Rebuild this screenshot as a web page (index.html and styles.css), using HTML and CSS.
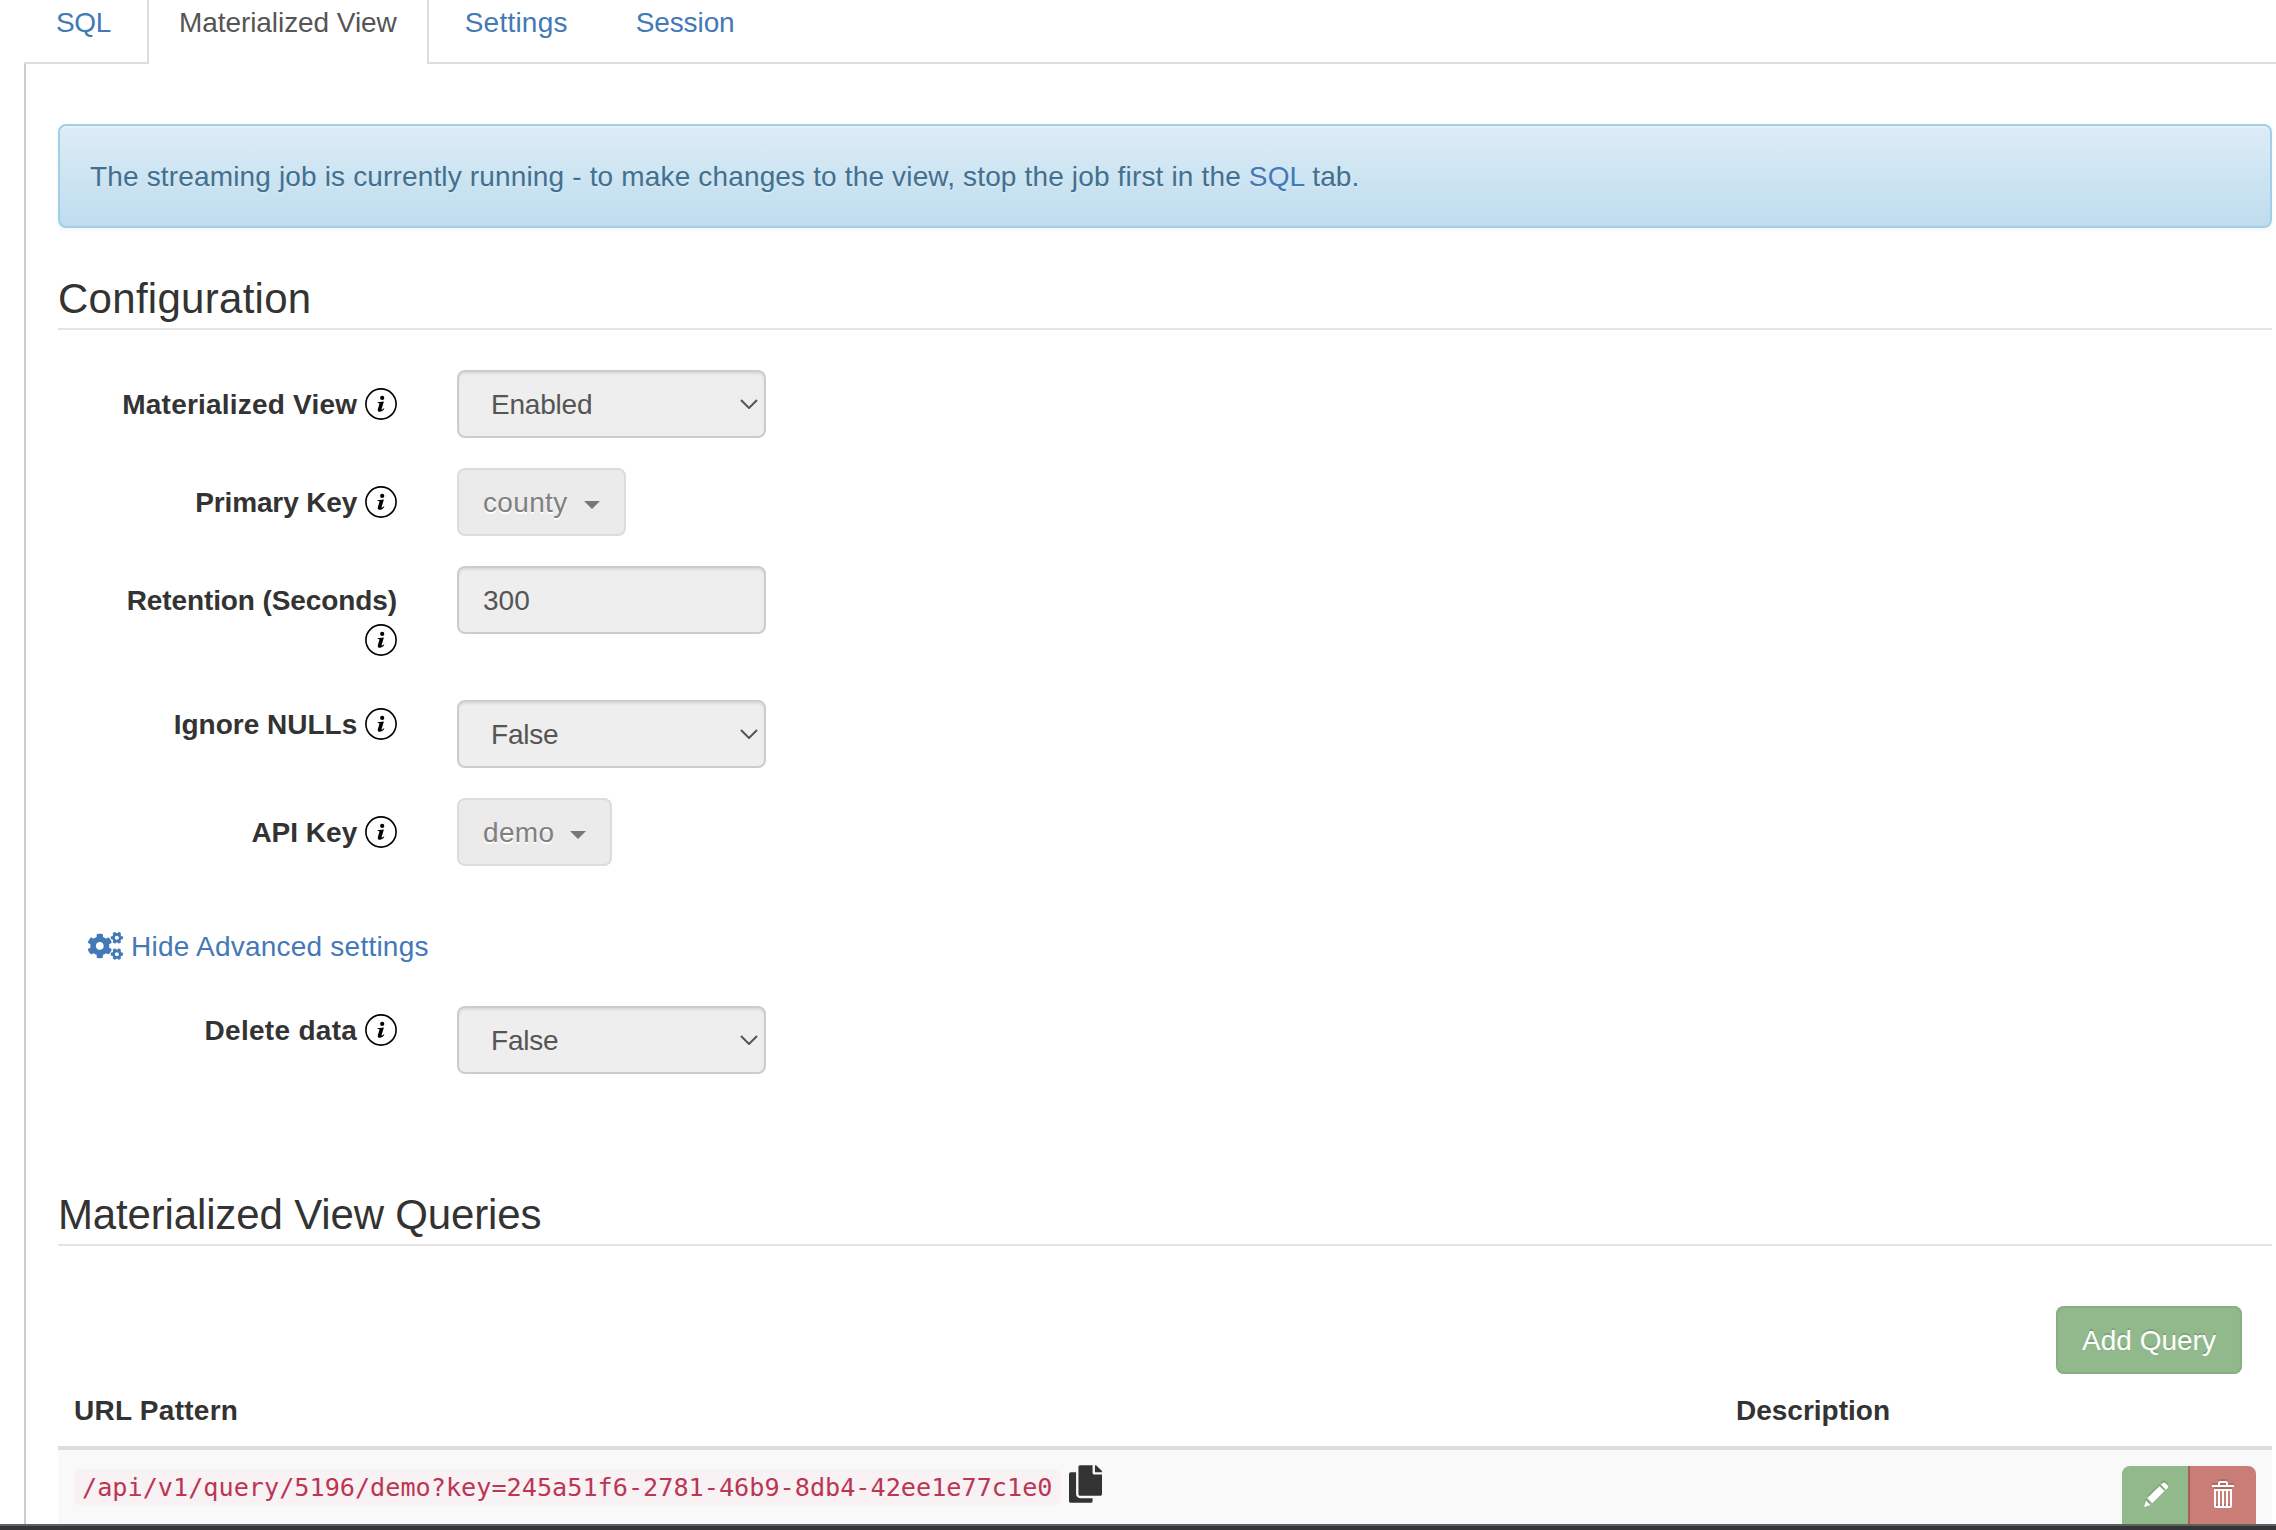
FILE: index.html
```html
<!DOCTYPE html>
<html lang="en">
<head>
<meta charset="utf-8">
<title>Materialized View</title>
<link rel="stylesheet" href="styles.css">
</head>
<body>
<svg class="sprite" aria-hidden="true">
  <symbol id="info" viewBox="0 0 32 32"><circle cx="16" cy="16" r="15.1" fill="none" stroke="#000" stroke-width="1.6"/><circle cx="17.2" cy="9.900" r="2.100"/><path d="M12.600 14.300l6.300-.9-2.300 7.500c-.3 1.100.4 1 2.200-.7l.6.6c-1.600 2.200-3 3-4.500 3-1.900 0-2.500-1.100-2-2.900l1.500-4.900c.2-.8-.3-.9-1.900-.9z"/></symbol>
  <symbol id="chevron" viewBox="0 0 18 10"><path d="M1 1l8 8 8-8" fill="none" stroke="#555" stroke-width="2"/></symbol>
  <symbol id="small-cog" viewBox="0 0 640 512" overflow="visible"><path d="M512.1 191l-8.2 14.3c-3 5.3-9.4 7.5-15.1 5.4-11.8-4.4-22.6-10.7-32.1-18.6-4.6-3.8-5.8-10.5-2.8-15.7l8.2-14.3c-6.9-8-12.3-17.3-15.9-27.4h-16.5c-6 0-11.2-4.3-12.2-10.3-2-12-2.1-24.6 0-37.1 1-6 6.2-10.4 12.2-10.4h16.5c3.6-10.1 9-19.4 15.9-27.4l-8.2-14.3c-3-5.2-1.9-11.9 2.8-15.7 9.5-7.9 20.4-14.2 32.1-18.6 5.7-2.1 12.1.1 15.1 5.4l8.2 14.3c10.5-1.9 21.2-1.9 31.7 0L552 6.3c3-5.3 9.4-7.5 15.1-5.4 11.8 4.4 22.6 10.7 32.1 18.6 4.6 3.8 5.8 10.5 2.8 15.7l-8.2 14.3c6.9 8 12.3 17.3 15.9 27.4h16.5c6 0 11.2 4.3 12.2 10.3 2 12 2.1 24.6 0 37.1-1 6-6.2 10.4-12.2 10.4h-16.5c-3.6 10.1-9 19.4-15.9 27.4l8.2 14.3c3 5.2 1.9 11.9-2.8 15.7-9.5 7.9-20.4 14.2-32.1 18.6-5.7 2.1-12.1-.1-15.1-5.4l-8.2-14.3c-10.4 1.9-21.2 1.9-31.7 0zm-10.5-58.8c38.5 29.6 82.4-14.3 52.8-52.8-38.5-29.7-82.4 14.3-52.8 52.8z"/></symbol>
</svg>

<ul class="tabs">
  <li class="tab t-sql"><a href="#">SQL</a></li>
  <li class="tab active"><a href="#">Materialized View</a></li>
  <li class="tab t-settings"><a href="#">Settings</a></li>
  <li class="tab t-session"><a href="#">Session</a></li>
</ul>

<main class="pane">
  <div class="alert">The streaming job is currently running - to make changes to the view, stop the job first in the <a href="#">SQL</a> tab.</div>

  <h2 class="legend">Configuration</h2>
  <div class="row">
    <div class="label"><b class="l-view">Materialized View</b> <svg class="info"><use href="#info"/></svg></div>
    <div class="control select">Enabled<svg class="chev"><use href="#chevron"/></svg></div>
  </div>
  <div class="row">
    <div class="label"><b class="l-primary">Primary Key</b> <svg class="info"><use href="#info"/></svg></div>
    <div class="btn-default">county<i class="caret"></i></div>
  </div>
  <div class="row tight">
    <div class="label"><b class="l-retention">Retention (Seconds)</b> <svg class="info"><use href="#info"/></svg></div>
    <div class="control">300</div>
  </div>
  <div class="row">
    <div class="label"><b>Ignore NULLs</b> <svg class="info"><use href="#info"/></svg></div>
    <div class="control select low">False<svg class="chev"><use href="#chevron"/></svg></div>
  </div>
  <div class="row">
    <div class="label"><b>API Key</b> <svg class="info"><use href="#info"/></svg></div>
    <div class="btn-default">demo<i class="caret"></i></div>
  </div>

  <a class="advanced" href="#"><svg viewBox="0 0 640 512"><use href="#small-cog" width="640" height="512"/><use href="#small-cog" y="298.9" width="640" height="512"/><path d="M386.3 286.1l33.7 16.8c10.1 5.8 14.5 18.1 10.5 29.1-8.9 24.2-26.4 46.4-42.6 65.8-7.4 8.9-20.2 11.1-30.3 5.3l-29.1-16.8c-16 13.7-34.6 24.6-54.9 31.7v33.6c0 11.6-8.3 21.6-19.7 23.6-24.6 4.2-50.4 4.4-75.9 0-11.5-2-20-11.9-20-23.6V418c-20.3-7.2-38.9-18-54.9-31.7L74 403c-10 5.8-22.9 3.6-30.3-5.3-16.2-19.4-33.3-41.6-42.2-65.7-4-10.9.4-23.2 10.5-29.1l33.3-16.8c-3.9-20.9-3.9-42.4 0-63.4L12 205.8c-10.1-5.8-14.6-18.1-10.5-29 8.9-24.2 26-46.4 42.2-65.8 7.4-8.9 20.2-11.1 30.3-5.3l29.1 16.8c16-13.7 34.6-24.6 54.9-31.7V57.1c0-11.5 8.2-21.5 19.6-23.5 24.6-4.2 50.5-4.4 76-.1 11.5 2 20 11.9 20 23.6v33.6c20.3 7.2 38.9 18 54.9 31.7l29.1-16.8c10-5.8 22.9-3.6 30.3 5.3 16.2 19.4 33.2 41.6 42.1 65.8 4 10.9.1 23.2-10 29.1l-33.7 16.8c3.9 21 3.9 42.5 0 63.5zm-117.6 21.1c59.2-77-28.7-164.9-105.7-105.7-59.2 77 28.7 164.9 105.7 105.7z"/></svg><span>Hide Advanced settings</span></a>

  <div class="row">
    <div class="label"><b class="l-delete">Delete data</b> <svg class="info"><use href="#info"/></svg></div>
    <div class="control select low">False<svg class="chev"><use href="#chevron"/></svg></div>
  </div>

  <h2 class="legend second">Materialized View Queries</h2>
  <div class="actions"><div class="add">Add Query</div></div>
  <div class="thead"><b class="th-url">URL Pattern</b><b>Description</b></div>
  <div class="trow">
    <code>/api/v1/query/5196/demo?key=245a51f6-2781-46b9-8db4-42ee1e77c1e0</code>
    <svg class="copy" viewBox="0 0 448 512"><path d="M320 448v40c0 13.255-10.745 24-24 24H24c-13.255 0-24-10.745-24-24V120c0-13.255 10.745-24 24-24h72v296c0 30.879 25.121 56 56 56h168zm0-344V0H152c-13.255 0-24 10.745-24 24v368c0 13.255 10.745 24 24 24h272c13.255 0 24-10.745 24-24V128H344c-13.2 0-24-10.8-24-24zm120.971-31.029L375.029 7.029A24 24 0 0 0 358.059 0H352v96h96v-6.059a24 24 0 0 0-7.029-16.97z"/></svg>
    <div class="group">
      <div class="edit"><svg viewBox="0 0 25 25"><path d="M0 25L2 18.500L6.500 23ZM3.300 16L15.500 4L20.500 9L8.200 21.200ZM17 2.700L18.900.8Q20 0 21.200.9L23.600 3.300Q24.700 4.500 23.800 5.800L21.900 7.700Z"/></svg></div>
      <div class="del"><svg viewBox="0 0 22 27"><path fill-rule="evenodd" d="M6 4V2Q6 0 8 0H14Q16 0 16 2V4H22V6H0V4ZM8 4H14V2H8ZM2 8H20V25Q20 27 18 27H4Q2 27 2 25ZM4 10V25H6V10ZM8 10V25H10V10ZM12 10V25H14V10ZM16 10V25H18V10Z"/></svg></div>
    </div>
  </div>
</main>
<div class="edge"></div>
</body>
</html>
```

FILE: styles.css
```css
* { box-sizing: border-box; }
body {
  margin: 0;
  height: 1530px;
  overflow: hidden;
  display: flex;
  flex-direction: column;
  background: #fff;
  color: #333;
  font: 28px/40px "Liberation Sans", Arial, sans-serif;
}
a { color: #4379b6; text-decoration: none; }
svg { display: block; fill: currentColor; }
.sprite { position: absolute; width: 0; height: 0; }

.tabs {
  list-style: none;
  margin: 0 0 0 24px;
  padding: 0;
  height: 64px;
  flex: none;
  display: flex;
  gap: 4px;
  border-bottom: 2px solid #ddd;
}
.tab { height: 64px; padding: 3px 32px 0; white-space: nowrap; }
.tab.active {
  padding: 3px 30px 0;
  border: solid #ddd;
  border-width: 0 2px;
  background: #fff;
  letter-spacing: -.07px;
}
.tab.active a { color: #555; }
.t-sql { letter-spacing: -.35px; }
.t-settings { letter-spacing: .22px; }
.t-session { letter-spacing: -.1px; }

.pane {
  flex: 1;
  min-height: 0;
  overflow: hidden;
  margin-left: 24px;
  border-left: 2px solid #ccc;
  padding: 60px 4px 0 32px;
}
.alert {
  height: 104px;
  padding: 31px 30px 0;
  border: 2px solid #a2cee7;
  border-radius: 8px;
  background: linear-gradient(#dcecf6, #bfddee);
  color: #427090;
  letter-spacing: .155px;
  text-shadow: 0 2px 0 rgba(255, 255, 255, .2);
  box-shadow: inset 0 2px 0 rgba(255, 255, 255, .25), 0 2px 4px rgba(0, 0, 0, .05);
  white-space: nowrap;
}
.legend {
  margin: 40px 0;
  height: 62px;
  border-bottom: 2px solid #e5e5e5;
  font-size: 42px;
  font-weight: 400;
  line-height: 62px;
  letter-spacing: .28px;
}
.row { display: flex; align-items: flex-start; margin-bottom: 30px; }
.tight { margin-bottom: 29px; }
.label {
  width: 339px;
  padding: 15px 0 0 40px;
  text-align: right;
  margin-right: 60px;
}
.l-view { letter-spacing: .21px; }
.l-primary { letter-spacing: -.13px; }
.l-retention { letter-spacing: -.1px; }
.l-delete { letter-spacing: .3px; }
.info { display: inline-block; width: 32px; height: 32px; vertical-align: -6px; color: #000; }
.control {
  width: 309px;
  height: 68px;
  padding: 13px 24px 0;
  border: 2px solid #ccc;
  border-radius: 8px;
  background: #eee;
  color: #555;
  box-shadow: inset 0 2px 2px rgba(0, 0, 0, .075);
}
.select {
  display: flex;
  justify-content: space-between;
  align-items: center;
  padding: 2px 6px 0 32px;
  letter-spacing: -.2px;
}
.low { margin-top: 10px; }
.chev { width: 18px; height: 10px; margin-top: -2px; }
.btn-default {
  display: flex;
  align-items: center;
  height: 68px;
  padding: 2px 24px 0;
  border: 2px solid #dcdcdc;
  border-radius: 8px;
  background: #ebebeb;
  color: #808080;
  letter-spacing: .35px;
  text-shadow: 0 2px 0 #fff;
}
.caret {
  margin: 4px 0 0 16px;
  border: solid transparent;
  border-width: 8px 8px 0;
  border-top-color: #777;
}
.advanced { display: flex; align-items: center; gap: 8px; width: max-content; margin: 59px 0 29px 30px; }
.advanced svg { width: 35px; height: 28px; }
.advanced span { padding-top: 2px; letter-spacing: .23px; }

.second { margin: 110px 0 60px; letter-spacing: -.15px; }
.actions { display: flex; justify-content: flex-end; padding-right: 30px; }
.add {
  height: 68px;
  width: 186px;
  padding: 15px 0 0;
  border-radius: 8px;
  text-align: center;
  background: #92b98b;
  color: #fff;
  text-shadow: 0 -2px 0 rgba(0, 0, 0, .13);
  box-shadow: inset 0 0 3px rgba(60, 110, 60, .5);
}
.thead { display: flex; height: 76px; padding: 17px 16px 0; border-bottom: 4px solid #ddd; }
.th-url { width: 1662px; letter-spacing: .26px; }
.trow { display: flex; align-items: flex-start; height: 110px; padding: 16px; background: #f9f9f9; }
code {
  margin: 3px 8px 0 0;
  padding: 4px 8px;
  height: 37px;
  border-radius: 8px;
  background: #f8f2f4;
  color: #bb3654;
  font: 25.2px/29px "DejaVu Sans Mono", monospace;
}
.copy { width: 33px; height: 38px; margin-top: -1px; }
.group { display: flex; margin-left: auto; color: #fff; }
.edit, .del { height: 68px; padding: 15px 0 0 22px; }
.edit { width: 66px; padding-top: 16px; border-radius: 8px 0 0 8px; background: #92b98b; }
.edit svg { width: 25px; height: 25px; }
.del { width: 68px; border-left: 2px solid #a9614f; border-radius: 0 8px 8px 0; background: #ca7c76; }
.del svg { width: 22px; height: 27px; }
.edit svg, .del svg { filter: drop-shadow(0 -2px 0 rgba(0, 0, 0, .13)); }

.edge { flex: none; height: 6px; background: #343539; border-top: 2px solid #5f6064; }
```
